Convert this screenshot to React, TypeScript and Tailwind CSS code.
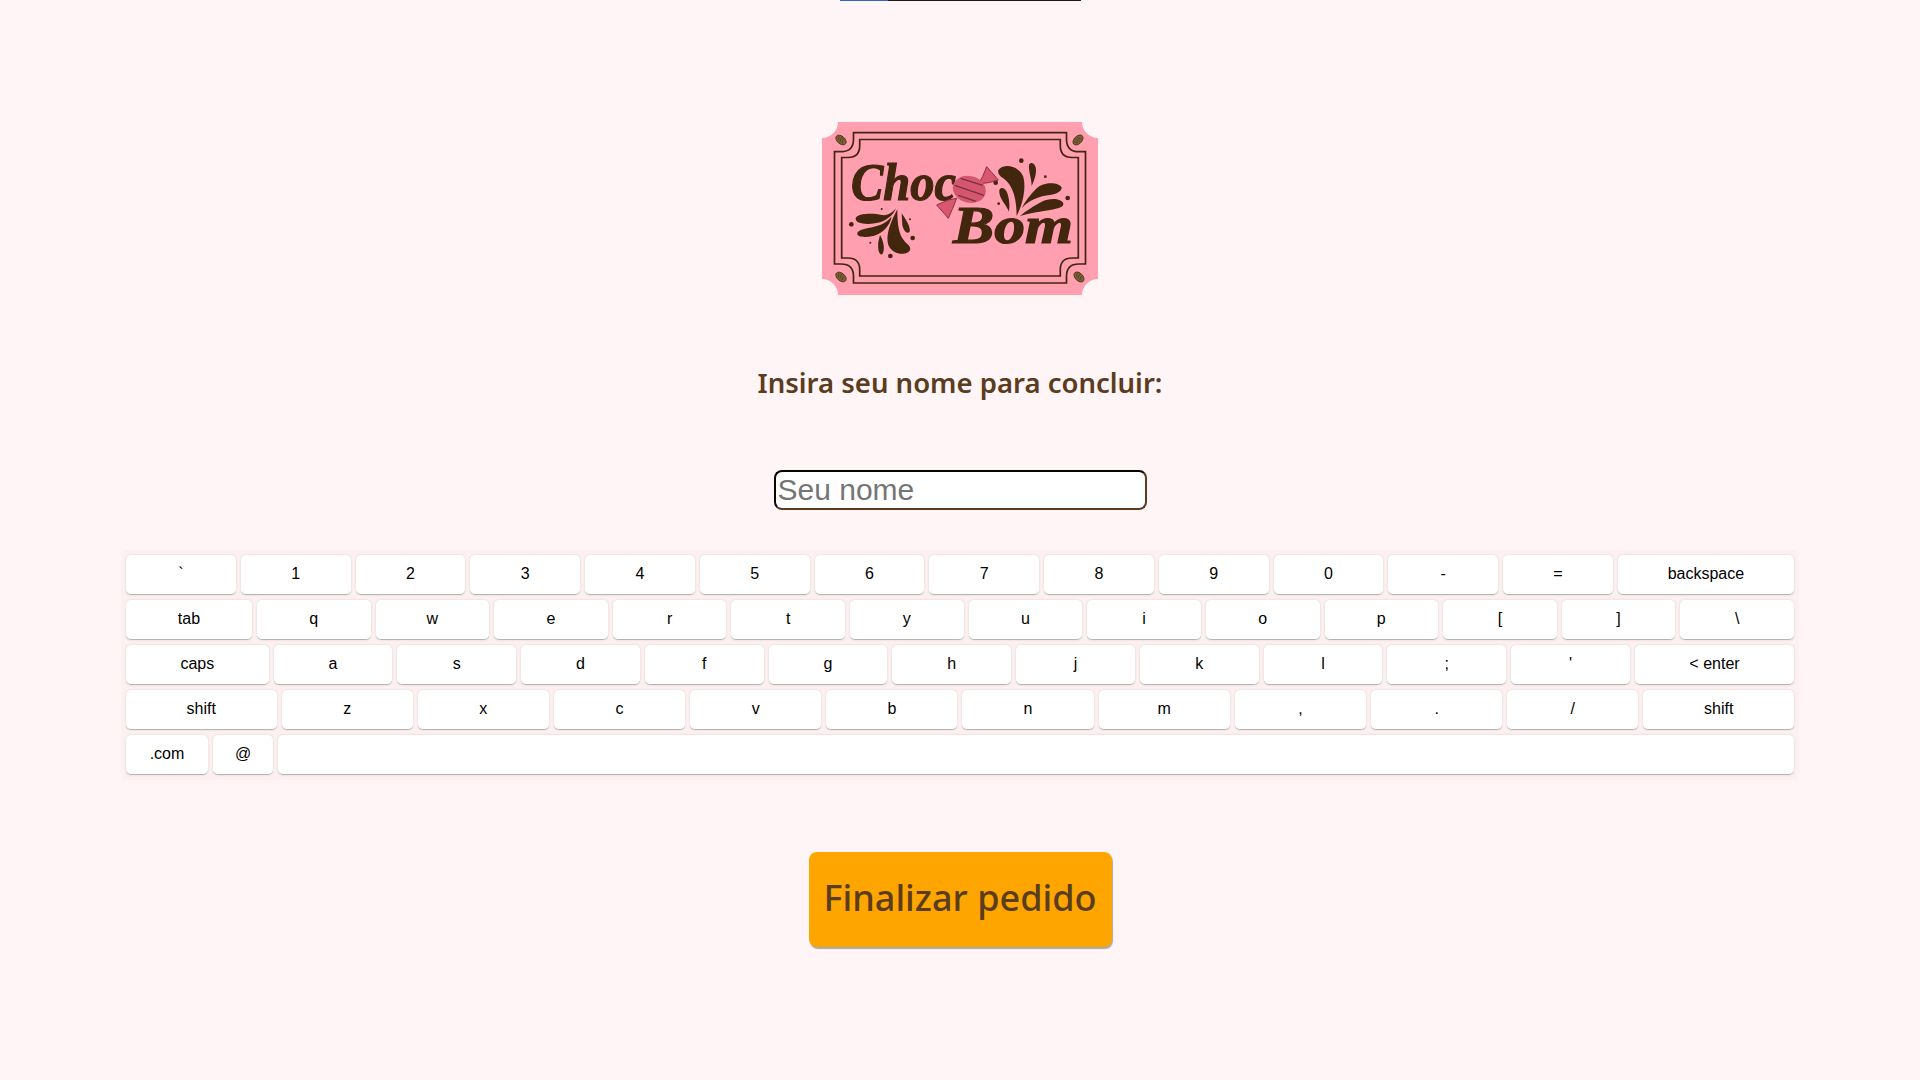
const rows = [
  ["`", "1", "2", "3", "4", "5", "6", "7", "8", "9", "0", "-", "=", "backspace"],
  ["tab", "q", "w", "e", "r", "t", "y", "u", "i", "o", "p", "[", "]", "\\"],
  ["caps", "a", "s", "d", "f", "g", "h", "j", "k", "l", ";", "'", "< enter"],
  ["shift", "z", "x", "c", "v", "b", "n", "m", ",", ".", "/", "shift"],
];

function Key({ label }: { label: string }) {
  // single characters share a base width, function keys grow from their text
  const base = label.length === 1 ? "w-[20px]" : "";
  return (
    <div
      className={`${base} grow h-10 px-[5px] pb-[2px] flex items-center justify-center bg-white rounded-[5px] border-b border-[#b5b5b5] shadow-[0_0_3px_-1px_rgba(0,0,0,0.3)] text-black`}
    >
      <span>{label}</span>
    </div>
  );
}

function Keyboard() {
  return (
    <div className="w-[1678px] mt-[40px] p-[5px] bg-[#fdf0f1] rounded-[5px] flex flex-col gap-[5px] font-['Liberation_Sans',Arial,sans-serif] text-base leading-6">
      {rows.map((row, i) => (
        <div key={i} className="flex gap-[5px]">
          {row.map((label, j) => (
            <Key key={j} label={label} />
          ))}
        </div>
      ))}
      <div className="flex gap-[5px]">
        <div className="w-[82px] h-10 pb-[2px] flex items-center justify-center bg-white rounded-[5px] border-b border-[#b5b5b5] shadow-[0_0_3px_-1px_rgba(0,0,0,0.3)] text-black">
          .com
        </div>
        <div className="w-[60px] h-10 pb-[2px] flex items-center justify-center bg-white rounded-[5px] border-b border-[#b5b5b5] shadow-[0_0_3px_-1px_rgba(0,0,0,0.3)] text-black">
          @
        </div>
        <div className="flex-1 h-10 bg-white rounded-[5px] border-b border-[#b5b5b5] shadow-[0_0_3px_-1px_rgba(0,0,0,0.3)]" />
      </div>
    </div>
  );
}

function framePath(l: number, t: number, r: number, b: number, n: number) {
  const c = n * 0.35;
  return [
    `M${l + n} ${t} H${r - n}`,
    `V${t + c} Q${r - n} ${t + n} ${r - c} ${t + n} H${r}`,
    `V${b - n} H${r - c} Q${r - n} ${b - n} ${r - n} ${b - c} V${b}`,
    `H${l + n} V${b - c} Q${l + n} ${b - n} ${l + c} ${b - n} H${l}`,
    `V${t + n} H${l + c} Q${l + n} ${t + n} ${l + n} ${t + c} Z`,
  ].join(" ");
}

function Bean({ x, y, rotate }: { x: number; y: number; rotate: number }) {
  return (
    <g transform={`translate(${x} ${y}) rotate(${rotate})`}>
      <ellipse rx="6" ry="3.8" fill="#7a6238" stroke="#4a2c12" strokeWidth="0.8" />
      <path d="M-4 -1.5 L-2 1.8 M-1.5 -2.5 L0.5 2.5 M1 -2.5 L3 2" stroke="#4a2c12" strokeWidth="0.6" />
    </g>
  );
}

function Logo() {
  const brown = "#43260e";
  return (
    <svg width="276" height="173" viewBox="0 0 276 173" className="mt-[121px] block">
      <path
        d="M16 0 H260 A16 16 0 0 0 276 16 V157 A16 16 0 0 0 260 173 H16 A16 16 0 0 0 0 157 V16 A16 16 0 0 0 16 0 Z"
        fill="#ff9fb0"
      />
      <path d={framePath(12.5, 10.7, 263.5, 161, 19)} fill="none" stroke={brown} strokeWidth="1.7" />
      <path d={framePath(19.7, 17.5, 256.3, 154, 18)} fill="none" stroke={brown} strokeWidth="1.7" />
      <Bean x={19} y={18} rotate={40} />
      <Bean x={256} y={18} rotate={-45} />
      <Bean x={19} y={155} rotate={40} />
      <Bean x={257} y={155} rotate={45} />

      <text
        x="29"
        y="78"
        fontFamily="'Liberation Serif', serif"
        fontStyle="italic"
        fontWeight="700"
        fontSize="52"
        fill={brown}
        stroke={brown}
        strokeWidth="1.2"
        textLength="105"
        lengthAdjust="spacingAndGlyphs"
      >
        Choc
      </text>
      <text
        x="131"
        y="121"
        fontFamily="'Liberation Serif', serif"
        fontStyle="italic"
        fontWeight="700"
        fontSize="52"
        fill={brown}
        stroke={brown}
        strokeWidth="1.2"
        textLength="120"
        lengthAdjust="spacingAndGlyphs"
      >
        Bom
      </text>

      {/* drawn in the coordinates of the 3x crop */}
      <g transform="translate(-12 -12) scale(0.33333)" fill={brown}>
        <path d="M565 180 C580 160 625 165 640 200 C650 240 635 290 620 318 C620 270 610 225 580 205 C570 198 562 190 565 180Z" />
        <path d="M657 165 C665 150 680 165 678 185 C676 205 668 220 665 228 C665 205 655 185 657 165Z" />
        <path d="M568 240 C575 228 590 235 595 260 C600 280 598 295 597 305 C590 285 565 265 568 240Z" />
        <path d="M755 232 C745 215 700 215 680 235 C660 255 645 275 635 295 C655 270 690 258 720 255 C740 252 755 245 755 232Z" />
        <path d="M760 280 C755 265 720 262 695 275 C670 288 645 305 630 318 C660 308 690 305 720 300 C745 296 762 292 760 280Z" />
        <circle cx="634" cy="152" r="7" />
        <circle cx="773" cy="264" r="7" />
        <circle cx="706" cy="200" r="4" />
        <circle cx="557" cy="218" r="7" />
        <circle cx="566" cy="281" r="4" />
        <path d="M137 325 C140 310 190 308 215 315 C235 318 250 305 258 295 C250 315 230 335 195 340 C165 345 135 340 137 325Z" />
        <path d="M142 370 C145 355 185 355 210 345 C225 340 240 325 245 320 C240 345 220 370 190 378 C165 383 140 382 142 370Z" />
        <path d="M300 420 C295 435 250 440 235 405 C225 375 245 330 262 298 C262 340 265 375 285 395 C295 405 303 410 300 420Z" />
        <path d="M275 310 C285 325 303 350 299 365 C290 375 280 360 277 345Z" />
        <path d="M210 375 C222 395 225 420 217 433 C205 435 203 415 205 395Z" />
        <circle cx="124" cy="343" r="7" />
        <circle cx="308" cy="384" r="7" />
        <circle cx="241" cy="438" r="7" />
        <circle cx="215" cy="297" r="3" />
        <circle cx="300" cy="328" r="3" />
        <circle cx="181" cy="398" r="3" />

        {/* candy */}
        <path d="M505 222 L518 200 L530 170 L565 210 L535 218 Z" fill="#d9566f" stroke="#8a3044" strokeWidth="3" />
        <path d="M440 265 L415 270 L380 285 L415 325 L428 295 Z" fill="#d9566f" stroke="#8a3044" strokeWidth="3" />
        <ellipse cx="478" cy="238" rx="50" ry="40" transform="rotate(15 478 238)" fill="#d4566f" />
        <path d="M452 205 L518 226 M434 226 L522 256 M445 256 L498 274" stroke="#7a2f40" strokeWidth="4" fill="none" />
      </g>
    </svg>
  );
}

export default function App() {
  return (
    <div className="min-h-screen bg-[#fff4f6] flex flex-col items-center">
      {/* Progress bar */}
      <div className="w-[241px] h-px bg-[#1a1a1a]">
        <div className="w-[48px] h-px bg-[#3366cc]" />
      </div>

      <Logo />

      <h1 className="mt-[63px] h-[50px] leading-[50px] text-[27.5px] font-semibold text-[#5a3d1f] font-['Noto_Sans',sans-serif]">
        Insira seu nome para concluir:
      </h1>

      <input
        placeholder="Seu nome"
        className="mt-[62px] w-[373px] h-10 px-[2px] pb-[2px] bg-white rounded-lg border-2 [border-style:inset] border-[#5c3a1e] text-[30px] font-['Liberation_Sans',Arial,sans-serif] placeholder:text-[#757575]"
      />

      <Keyboard />

      <button className="mt-[72px] w-[303px] h-[95px] pb-[4px] whitespace-nowrap bg-[#ffa500] rounded-lg shadow-[1px_2px_1px_#aaaaaa] text-[36px] font-medium text-[#5a3d1f] font-['Noto_Sans',sans-serif]">
        Finalizar pedido
      </button>
    </div>
  );
}
